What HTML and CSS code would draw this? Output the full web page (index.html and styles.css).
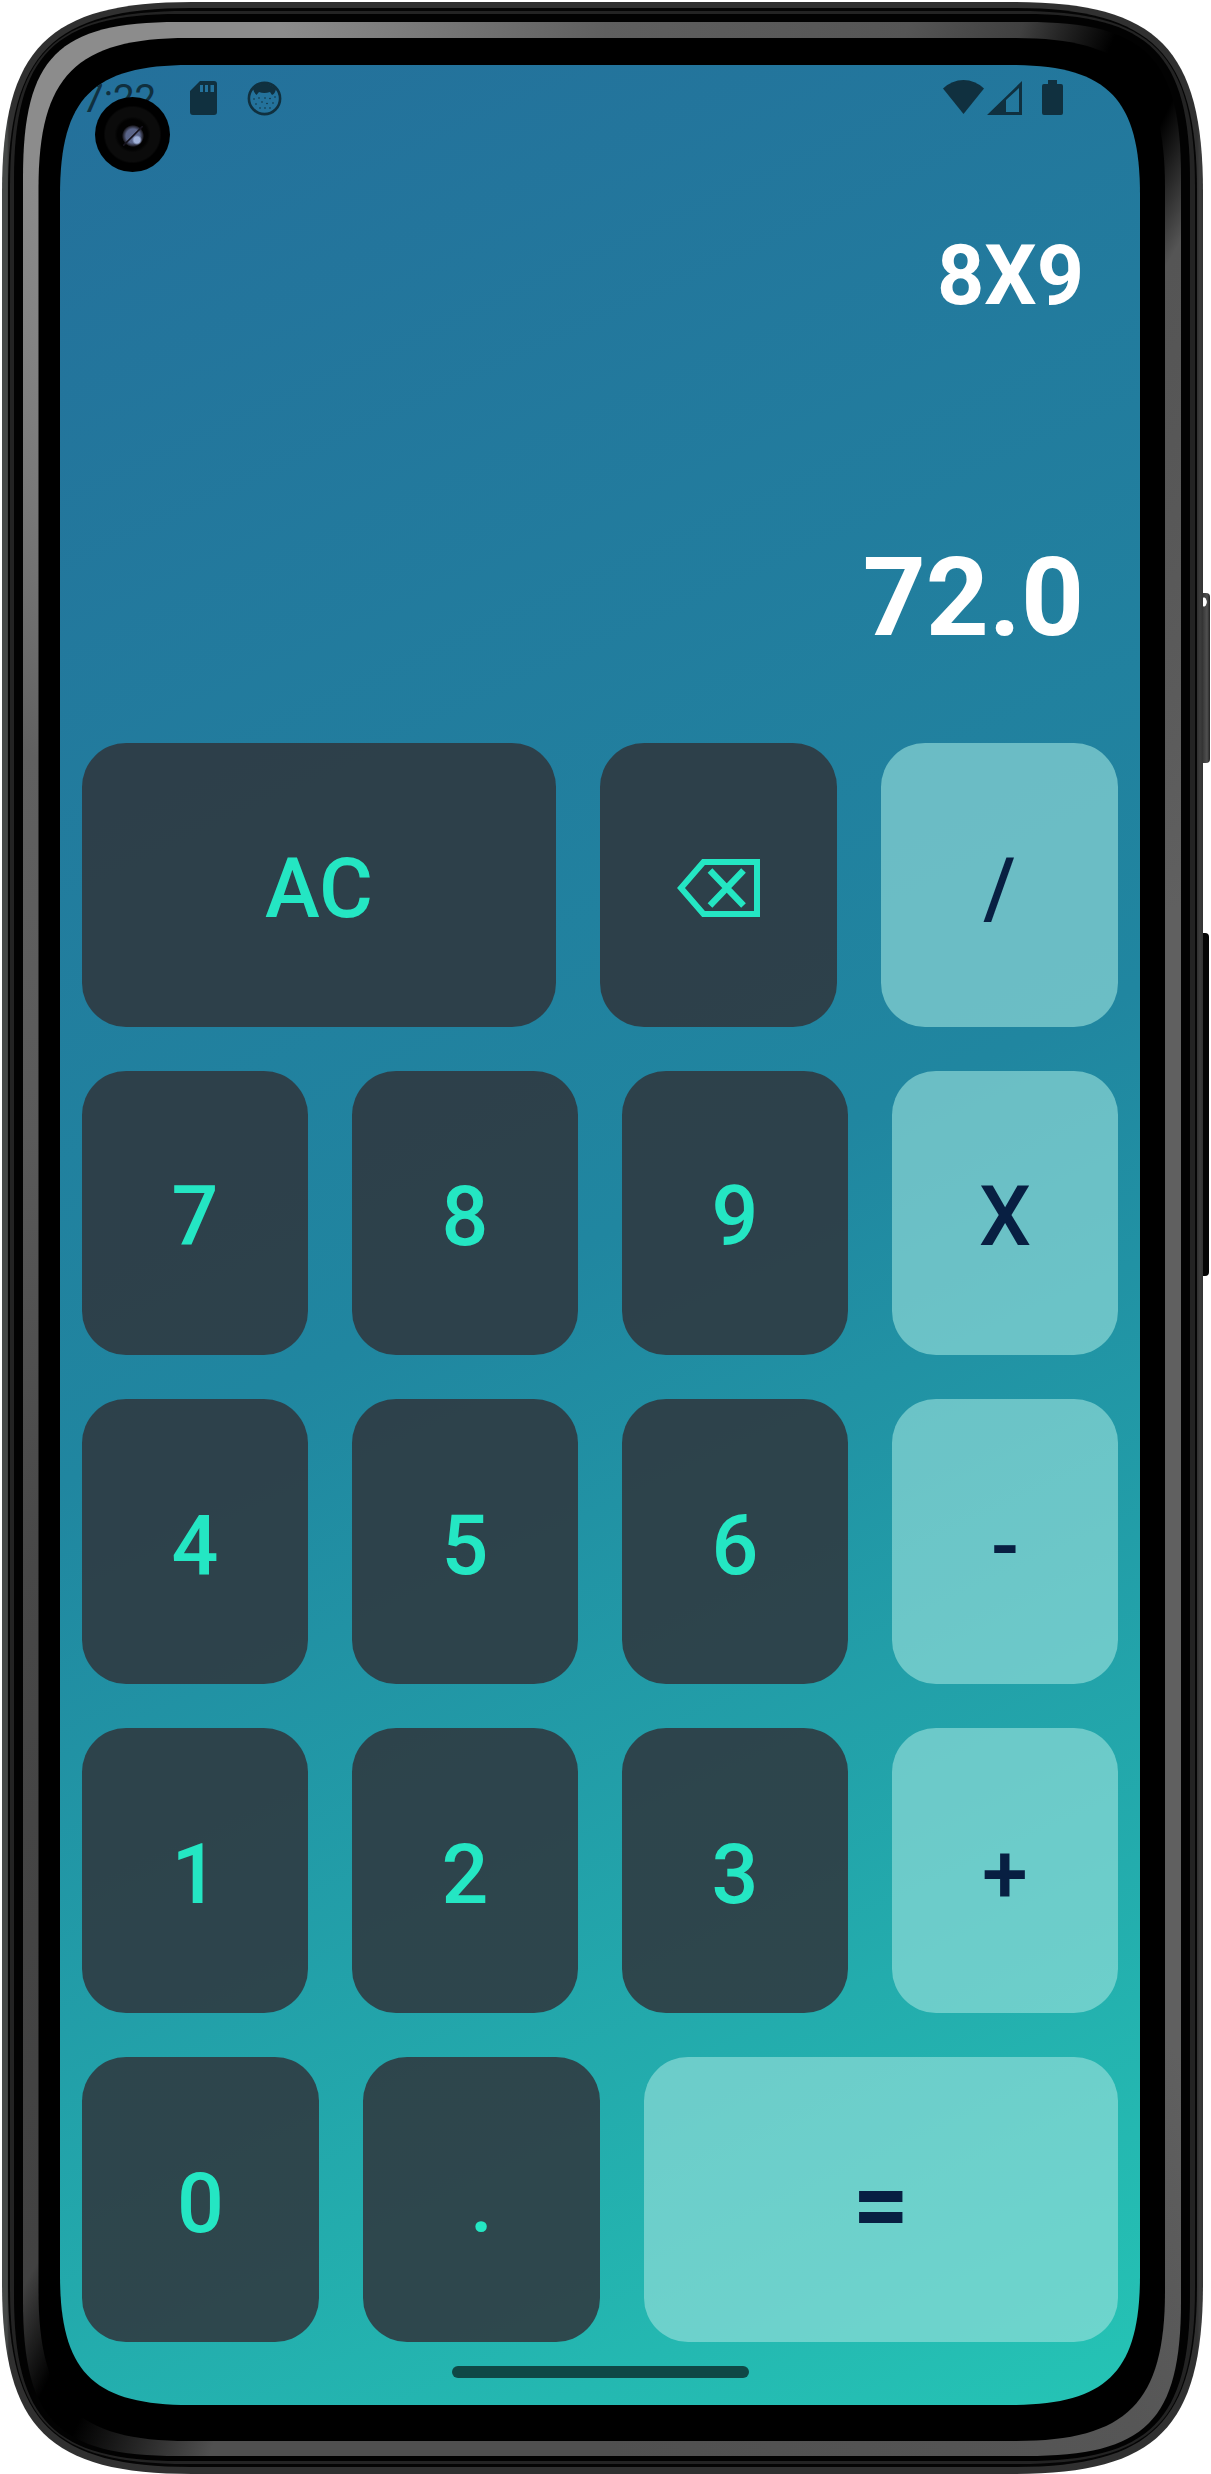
FILE: index.html
```html
<!DOCTYPE html>
<html lang="en">
<head>
<meta charset="utf-8">
<title>Calculator</title>
<link rel="stylesheet" href="styles.css">
</head>
<body>
<div class="device">
  <div class="side-keys"><i class="power"></i><i class="volume"></i></div>
  <div class="layer shell"></div>
  <div class="layer groove"></div>
  <div class="layer line"></div>
  <div class="layer gap"></div>
  <div class="layer ring"></div>
  <div class="layer bezel"></div>
  <main class="screen">
    <header class="status">
      <span class="time">7:22</span>
      <svg class="sd" width="27" height="34" viewBox="0 0 27 34"><path fill-rule="evenodd" d="M10 0H24Q27 0 27 3V31Q27 34 24 34H3Q0 34 0 31V10ZM10 4V11H13V4ZM15 4V11H18V4ZM20.500 4V11H24V4Z"/></svg>
      <svg class="face" width="35" height="35" viewBox="0 0 35 35"><circle cx="17.500" cy="17.500" r="15.600" fill="none" stroke="currentColor" stroke-width="2.600"/><path d="M6 8Q17 -3 29 8Q28 13 25 14L23 11Q17 13 12 11L9.500 14Q7 12 6 8Z"/><g><circle cx="7" cy="18" r=".8"/><circle cx="12" cy="17" r=".8"/><circle cx="18" cy="17" r=".8"/><circle cx="23" cy="17.500" r=".8"/><circle cx="28" cy="16" r=".8"/><circle cx="9" cy="23" r=".8"/><circle cx="15" cy="21" r=".8"/><circle cx="20" cy="22.500" r=".8"/><circle cx="26" cy="22" r=".8"/><circle cx="13" cy="27" r=".8"/><circle cx="18" cy="27" r=".8"/><circle cx="23" cy="27" r=".8"/></g></svg>
      <svg class="signals" width="121" height="35" viewBox="0 0 121 35"><path d="M0 8.500Q9 0 20.500 0T41 8.500L20.500 34Z"/><path fill-rule="evenodd" d="M44 35L79 1V35ZM63 20V32H76V8Z"/><path d="M105 0H114V4H118Q120 4 120 6V33Q120 35 118 35H101Q99 35 99 33V6Q99 4 101 4H105Z"/></svg>
    </header>
    <section class="display">
      <div class="expression">8X9</div>
      <div class="result">72.0</div>
    </section>
    <section class="keys">
      <div class="row"><button class="key wide">AC</button><button class="key" aria-label="Delete"><svg class="delete" width="83" height="58" viewBox="0 0 83 58"><path d="M26.500 3H80V55H26.500L4 29Z"/><path d="M33 11.500L66.500 46.500M66.500 11.500L33 46.500" stroke-width="6.500"/></svg></button><button class="key op">/</button></div>
      <div class="row"><button class="key">7</button><button class="key">8</button><button class="key">9</button><button class="key op">X</button></div>
      <div class="row"><button class="key">4</button><button class="key">5</button><button class="key">6</button><button class="key op">-</button></div>
      <div class="row"><button class="key">1</button><button class="key">2</button><button class="key">3</button><button class="key op">+</button></div>
      <div class="row"><button class="key">0</button><button class="key">.</button><button class="key op wide equals">=</button></div>
    </section>
    <div class="home"></div>
    <div class="camera"></div>
  </main>
</div>
</body>
</html>
```
FILE: styles.css
```css
* { box-sizing: border-box; }
body { margin: 0; background: #fff; font-family: Roboto, sans-serif; }

.device { display: grid; width: 1211px; height: 2474px; overflow: hidden; }
.device > * { grid-area: 1 / 1; }

/* Phone body, from the outer shell inwards */
.shell {
  background: linear-gradient(90deg, #454847 0 7px, #303030 9px 1197px, #3c3c3c 1200px, #333 1203px);
  clip-path: path("M2 192C2 48 48 2 192 2H1013C1157 2 1203 48 1203 192V2283C1203 2428 1157 2474 1013 2474H192C48 2474 2 2428 2 2283Z");
}
.groove {
  background: #050505;
  clip-path: path("M8 191C8 53 53 8 191 8H1014C1152 8 1197 53 1197 191V2284C1197 2422 1152 2467 1014 2467H191C53 2467 8 2422 8 2284Z");
}
.line {
  background: #232323;
  clip-path: path("M10 187C10 53 53 11 187 11H1018C1152 11 1195 53 1195 187V2288C1195 2422 1152 2464 1018 2464H187C53 2464 10 2422 10 2288Z");
}
.gap {
  background: #020202;
  clip-path: path("M14 180C14 54 54 14 180 14H1024C1150 14 1190 54 1190 180V2295C1190 2421 1150 2461 1024 2461H180C54 2461 14 2421 14 2295Z");
}
.ring {
  background: conic-gradient(#5f5f5f 0, #555 14deg, #404040 19deg, #000 23deg 26.500deg, #555 30deg, #606060 60deg 145deg, #565656 156deg, #505050 180deg, #505050 198deg, #000 204deg 206deg, #424242 209deg, #484848 240deg, #5a5a5a 280deg, #606060 310deg, #8c8c8c 332deg, #8c8c8c 345deg, #5f5f5f 360deg);
  clip-path: path("M23 177C23 57 58 22 178 22H1026C1146 22 1181 57 1181 177V2301C1181 2421 1146 2456 1026 2456H178C58 2456 23 2421 23 2301Z");
}
.bezel {
  background: #000;
  clip-path: path("M38.500 188C38.500 76 76 38 188 38H1015C1127 38 1165 76 1165 188V2291C1165 2403 1127 2441 1015 2441H188C76 2441 38.500 2403 38.500 2291Z");
}
.side-keys { display: flex; flex-direction: column; align-items: flex-end; padding: 593px 1px 0 0; }
.side-keys i { width: 16px; border-radius: 4px; }
.power {
  height: 170px;
  background:
    radial-gradient(ellipse 3px 5px at 10px 9px, #fff 80%, transparent),
    linear-gradient(90deg, #333 8px, #505050 13px, #222 16px);
}
.volume { height: 343px; margin: 170px 1px 0 0; background: #050505; }

.screen {
  position: relative;
  display: flex;
  flex-direction: column;
  width: 1080px;
  height: 2340px;
  margin: 65px 0 0 60px;
  background: linear-gradient(155.225deg, #24709b, #2086a0 50%, #25c4b5);
  clip-path: path("M0 130C0 33 33 0 130 0H950C1047 0 1080 33 1080 130V2210C1080 2307 1047 2340 950 2340H130C33 2340 0 2307 0 2210Z");
}

.status { display: flex; height: 66px; padding: 15px 76px 0 22px; color: #10303f; }
.status svg { fill: currentColor; }
.time { width: 108px; font-size: 38.500px; line-height: 38px; white-space: nowrap; }
.sd { margin-top: 1px; }
.face { margin: 1px 0 0 30px; }
.signals { margin-left: auto; }

.display { height: 612px; padding: 97px 56px 0; color: #fff; font-weight: 700; text-align: right; }
.expression { font-size: 82.500px; line-height: 96px; }
.result { margin-top: 210px; font-size: 110px; line-height: 128px; }

.keys { display: grid; grid-template-rows: 284px 284px 285px 285px 285px; gap: 44px; padding: 0 22px; }
.row { display: flex; gap: 44px; }
.key {
  display: flex;
  flex: 1 1 0;
  align-items: center;
  justify-content: center;
  min-width: 0;
  padding: 8px 0 0;
  border: 0;
  border-radius: 44px;
  background: rgba(48, 53, 60, .86);
  color: #24e6c3;
  font: 500 82.500px/96px Roboto, sans-serif;
}
.key.wide { flex: 0 0 474px; }
.op { background: rgba(156, 226, 220, .61); color: #081f42; }
.equals { font-size: 99px; font-weight: 700; }
.delete { margin-top: -3px; fill: none; stroke: currentColor; stroke-width: 6; }

.home { width: 297px; height: 12px; margin: 24px auto 0; border-radius: 6px; background: #0f4846; }

.camera {
  position: absolute;
  left: 35px;
  top: 32px;
  width: 75px;
  height: 75px;
  border-radius: 50%;
  background:
    radial-gradient(circle at 42px 43px, #9fb0d8 0 3px, transparent 5px),
    linear-gradient(135deg, transparent 46%, #15121c 48% 51%, transparent 54%) 28px 29px / 20px 20px no-repeat,
    radial-gradient(circle at 38px 39px, #5a6488 0 7px, #22222c 10px, transparent 11px),
    radial-gradient(circle at 37.500px 37.500px, #020202 0 15px, #0b0b0b 18px 27px, #000 29px);
}
```
